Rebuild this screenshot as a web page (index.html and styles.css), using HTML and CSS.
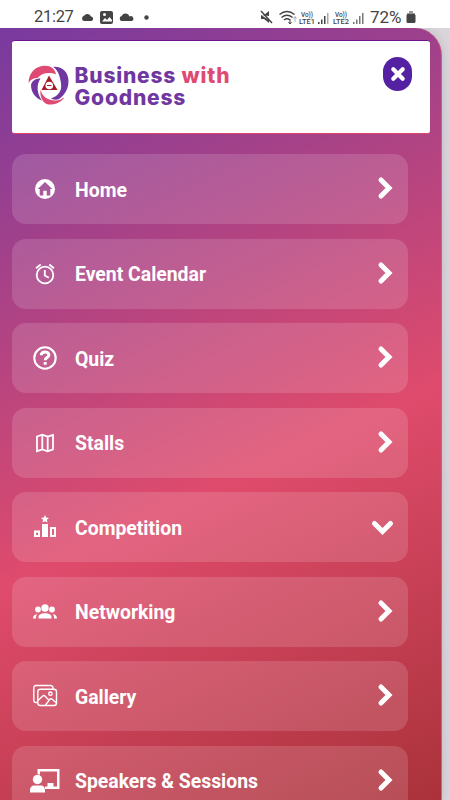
FILE: index.html
```
<!DOCTYPE html>
<html lang="en">
<head>
    <meta charset="UTF-8">
    <meta name="viewport" content="width=device-width, initial-scale=1.0">
    <title>Business with Goodness</title>
    <link rel="stylesheet" href="styles.css">
</head>
<body>
    <div class="status-bar">
        <span class="time">21:27</span>
        <svg class="status-left" width="72" height="16" viewBox="0 0 72 16" fill="#444">
            <path d="M4 12a2.700 2.700 0 0 1 0-5.200A4 4 0 0 1 11 7.500a2.300 2.300 0 0 1 .5 4.500z"/>
            <rect x="20" y="2" width="13" height="13" rx="2"/>
            <path d="M22 12.500l3-3.500 2 2 2.500-3 2.500 3v1.500z" fill="#fff"/>
            <circle cx="24.500" cy="5.500" r="1.500" fill="#fff"/>
            <path d="M41.500 12a2.600 2.600 0 0 1 .2-5 4.200 4.200 0 0 1 7.800.5A2.500 2.500 0 0 1 52 12z"/>
            <circle cx="66.500" cy="8.500" r="2.200"/>
        </svg>
        <svg class="status-right" width="110" height="18" viewBox="0 0 110 18" fill="#444">
            <path d="M1 7h3l5-4v5zM1 7v4h3l5 4v-3z"/>
            <path d="M1 3l11 12" stroke="#444" stroke-width="1.500"/>
            <g fill="none" stroke="#444" stroke-width="1.500">
                <path d="M19.500 6.500q7.500-6 15 0M21.500 9.500q5.500-4.500 11 0M24 12q3-2.500 6 0"/>
                <path d="M30 11v5M28.500 14l1.500 2 1.500-2" stroke-width="1"/>
                <path d="M35 14v-5M33.500 10.500l1.500-2 1.500 2" stroke="#aaa" stroke-width="1"/>
            </g>
            <text class="lte" x="41" y="8.500" textLength="12" lengthAdjust="spacingAndGlyphs">Vo))</text>
            <text class="lte" x="39" y="16" textLength="16" lengthAdjust="spacingAndGlyphs">LTE1</text>
            <path d="M58 14h1.500v2H58zM61 11.500h1.500V16H61zM64 8h1.500v8H64z"/>
            <path d="M67 5h1.500v11H67z" fill="#aaa"/>
            <text class="lte" x="75" y="8.500" textLength="12" lengthAdjust="spacingAndGlyphs">Vo))</text>
            <text class="lte" x="73" y="16" textLength="16" lengthAdjust="spacingAndGlyphs">LTE2</text>
            <path d="M93 14h1.500v2H93zM96 11.500h1.500V16H96zM99 8h1.500v8H99zM102 5h1.500v11H102z" fill="#777"/>
        </svg>
        <span class="battery-level">72%</span>
        <svg class="battery" width="10" height="14" viewBox="0 0 10 14">
            <path d="M3 1h4v2h2v3H1V3h2z" fill="#999"/>
            <rect x="0.500" y="4" width="9" height="9" rx="1.500" fill="#444"/>
        </svg>
    </div>

    <div class="page">
        <div class="sidebar">
            <div class="logo-box">
                <svg class="logo" width="42" height="42" viewBox="0 0 42 42">
                    <path d="M.5 18C1 7 8 .8 17 .8c6 0 10 3 11 8.700-7-3-15-1-18.500 3.500-4 0-7 1.500-9 5z" fill="#df4a72"/>
                    <path d="M25 1.800C34 1 40.500 7 40.500 16c0 8-4 14-9.500 18-2 1-5 1-8-.5 8-3 11-8 10-15C32 11 30 5 25 1.800z" fill="#7037a0"/>
                    <path d="M12.500 13.500C8 20 9 29 14 35.500 7 33 3 27 3 20c1-4.500 5-6.500 9.500-6.500z" fill="#7037a0"/>
                    <path d="M12.500 24.500C14 32 20 35 27 35.500c4 .3 7-1.500 9.500-3.500-3 5-9 8-16 7.500-5-.5-9-7-8-15z" fill="#df4a72"/>
                    <path d="M21 10.500L29.500 25h-16z" fill="#a51d28"/>
                    <circle cx="21.300" cy="20.500" r="3.800" fill="#fff"/>
                    <path d="M19 20.500h4.500" stroke="#a51d28"/>
                </svg>
                <div class="brand">Business <span>with</span><br>Goodness</div>
                <button class="close-button" aria-label="Close">
                    <svg width="16" height="16" viewBox="0 0 16 16"><path d="M3.300 3.300l9.400 9.400M12.700 3.300l-9.400 9.400" stroke="#fff" stroke-width="4.200" stroke-linecap="round"/></svg>
                </button>
            </div>

            <nav class="menu">
                <a class="menu-item">
                    <svg class="icon" viewBox="0 0 32 32" fill="#fff"><path fill-rule="evenodd" d="M16 6a10 10 0 1 0 0 20 10 10 0 0 0 0-20zM8.700 16L16 9l7.300 7h-2v6.500h-3.600v-4.800h-3.400v4.800h-3.600V16z"/></svg>
                    <span>Home</span>
                    <svg class="arrow" viewBox="0 0 24 24"><path d="M8 4l8 8-8 8"/></svg>
                </a>
                <a class="menu-item">
                    <svg class="icon line" viewBox="0 0 32 32"><circle cx="16" cy="17" r="8.300"/><path d="M15.800 12v5.500l4 2.300M7 10.300l4.700-3.800M25 10.300l-4.700-3.800"/></svg>
                    <span>Event Calendar</span>
                    <svg class="arrow" viewBox="0 0 24 24"><path d="M8 4l8 8-8 8"/></svg>
                </a>
                <a class="menu-item">
                    <svg class="icon line" viewBox="0 0 32 32"><circle cx="16" cy="16" r="10.700" stroke-width="2.100"/><path d="M12.300 13.300c0-4.500 7.600-4.200 7.600-.3 0 2.700-3.700 2.500-3.700 5.300M16.200 20v2.800" stroke-width="3"/></svg>
                    <span>Quiz</span>
                    <svg class="arrow" viewBox="0 0 24 24"><path d="M8 4l8 8-8 8"/></svg>
                </a>
                <a class="menu-item">
                    <svg class="icon line" viewBox="0 0 32 32"><path d="M8 9.500l5.300-1.800 5.400 2L24 7.900v14.500l-5.300 2-5.400-2L8 24.200zM13.300 7.700v14.700M18.700 9.700v14.700"/></svg>
                    <span>Stalls</span>
                    <svg class="arrow" viewBox="0 0 24 24"><path d="M8 4l8 8-8 8"/></svg>
                </a>
                <a class="menu-item">
                    <svg class="icon" viewBox="0 0 32 32" fill="#fff"><path fill-rule="evenodd" d="M16 4l1.200 2.600 2.800.3-2.100 1.900.6 2.800-2.500-1.400-2.500 1.400.6-2.800L12 6.900l2.800-.3zM13 13h6v13h-6zM5 19.500h6V26H5zM7 21.700v2.200h2v-2.200zM21 16h6v10h-6zM23 18v6h2v-6z"/></svg>
                    <span>Competition</span>
                    <svg class="arrow" viewBox="0 0 24 24"><path d="M1.500 9.500l8 8 8-8"/></svg>
                </a>
                <a class="menu-item">
                    <svg class="icon" viewBox="0 0 32 32" fill="#fff"><circle cx="16" cy="12" r="3.700"/><circle cx="9" cy="13.500" r="2.900"/><circle cx="23" cy="13.500" r="2.900"/><path d="M9.500 22.500v-1.400c0-5 13-5 13 0v1.400zM4 22.500c0-2.500 1.500-4.200 4.300-4.300-1.500 1.500-1.300 2.700-1.300 4.300zM28 22.500c0-2.500-1.500-4.200-4.300-4.300 1.500 1.500 1.300 2.700 1.300 4.300z"/></svg>
                    <span>Networking</span>
                    <svg class="arrow" viewBox="0 0 24 24"><path d="M8 4l8 8-8 8"/></svg>
                </a>
                <a class="menu-item">
                    <svg class="icon line thin" viewBox="0 0 32 32"><path d="M8.500 22.500H7A2.300 2.300 0 0 1 4.800 20V8A2.300 2.300 0 0 1 7 5.500h14.500A2.300 2.300 0 0 1 24 8v1.300"/><rect x="8.800" y="9.300" width="18.700" height="16.200" rx="2.500"/><circle cx="21.400" cy="13.700" r="1.700"/><path d="M9 20.500l4.700-4.500c.8-.8 1.700-.7 2.500.2l3.800 4.300-3.500 4.500M19.500 20l1.500-1c1-.5 1.700-.2 2.500.5l4 3.500"/></svg>
                    <span>Gallery</span>
                    <svg class="arrow" viewBox="0 0 24 24"><path d="M8 4l8 8-8 8"/></svg>
                </a>
                <a class="menu-item">
                    <svg class="icon" viewBox="0 0 32 32" fill="#fff"><circle cx="8.500" cy="14.500" r="4.700"/><path d="M1 27.500V25c0-3 2-4.500 4-4.500h7c2.500 0 4 2 4 4.500v2.500zM8.500 4h22v20H16v-2.500h2.500V18h6v3.500H28v-15H11v3.200q-1.200-.7-2.500-.7z"/></svg>
                    <span>Speakers &amp; Sessions</span>
                    <svg class="arrow" viewBox="0 0 24 24"><path d="M8 4l8 8-8 8"/></svg>
                </a>
            </nav>
        </div>
    </div>
</body>
</html>
```
FILE: styles.css
```
* {
    box-sizing: border-box;
}

body {
    margin: 0;
    height: 800px;
    overflow: hidden;
    font-family: Roboto, sans-serif;
    background-color: #fff;
}

.status-bar {
    height: 28px;
    display: flex;
    align-items: center;
    padding: 5px 0 0 34px;
    color: #444;
}

.time {
    width: 46px;
    font-size: 16.5px;
    letter-spacing: -0.3px;
}

.status-left {
    margin-right: 108px;
}

.lte {
    font-size: 7.5px;
    font-weight: 500;
}

.battery-level {
    width: 36px;
    font-size: 17px;
    letter-spacing: -0.1px;
}

.page {
    height: 772px;
    overflow: hidden;
    background-color: #d9d5db;
}

.sidebar {
    width: 442px;
    height: 772px;
    padding: 12px 12px 0 11.5px;
    overflow: hidden;
    border-top-right-radius: 27px;
    border-right: 1px solid #d65d80;
    background: linear-gradient(155deg, #783a9f 0%, #df4b6c 57.5%, #aa323a 100%);
    box-shadow: 0 0 10px rgba(40, 40, 50, 0.15);
}

.logo-box {
    display: flex;
    width: 418px;
    height: 94px;
    padding: 24px 17.5px 0 16px;
    background-color: #fff;
    border-top: 1px solid #6d138c;
    border-bottom: 1px solid #e04268;
    border-radius: 3px;
}

.brand {
    flex: 1;
    margin-left: 5px;
    font-family: Inter, sans-serif;
    font-size: 21px;
    font-weight: 800;
    line-height: 22px;
    letter-spacing: 0.8px;
    white-space: nowrap;
    color: #7037a0;
}

.brand span {
    color: #df4a72;
}

.close-button {
    display: flex;
    align-items: center;
    justify-content: center;
    width: 29px;
    height: 34px;
    margin-top: -8px;
    padding: 0;
    border: none;
    border-radius: 15px;
    background-color: #5521a3;
}

.menu {
    display: flex;
    flex-direction: column;
    gap: 14.5px;
    margin-top: 20px;
}

.menu-item {
    display: flex;
    flex-shrink: 0;
    align-items: center;
    width: 396.5px;
    height: 70px;
    padding: 0 11px 0 17px;
    border-radius: 14px;
    background-color: rgba(255, 255, 255, 0.14);
    color: #fff;
    font-size: 19.4px;
    font-weight: 700;
}

.menu-item span {
    flex: 1;
    margin: 2px 0 0 14.5px;
}

.icon {
    width: 32px;
    height: 32px;
}

.line {
    fill: none;
    stroke: #fff;
    stroke-width: 1.8;
}

.thin {
    stroke-width: 1.4;
}

.arrow {
    width: 24px;
    height: 24px;
    margin-top: -2px;
    overflow: visible;
    fill: none;
    stroke: #fff;
    stroke-width: 5;
    stroke-linecap: round;
}
```
